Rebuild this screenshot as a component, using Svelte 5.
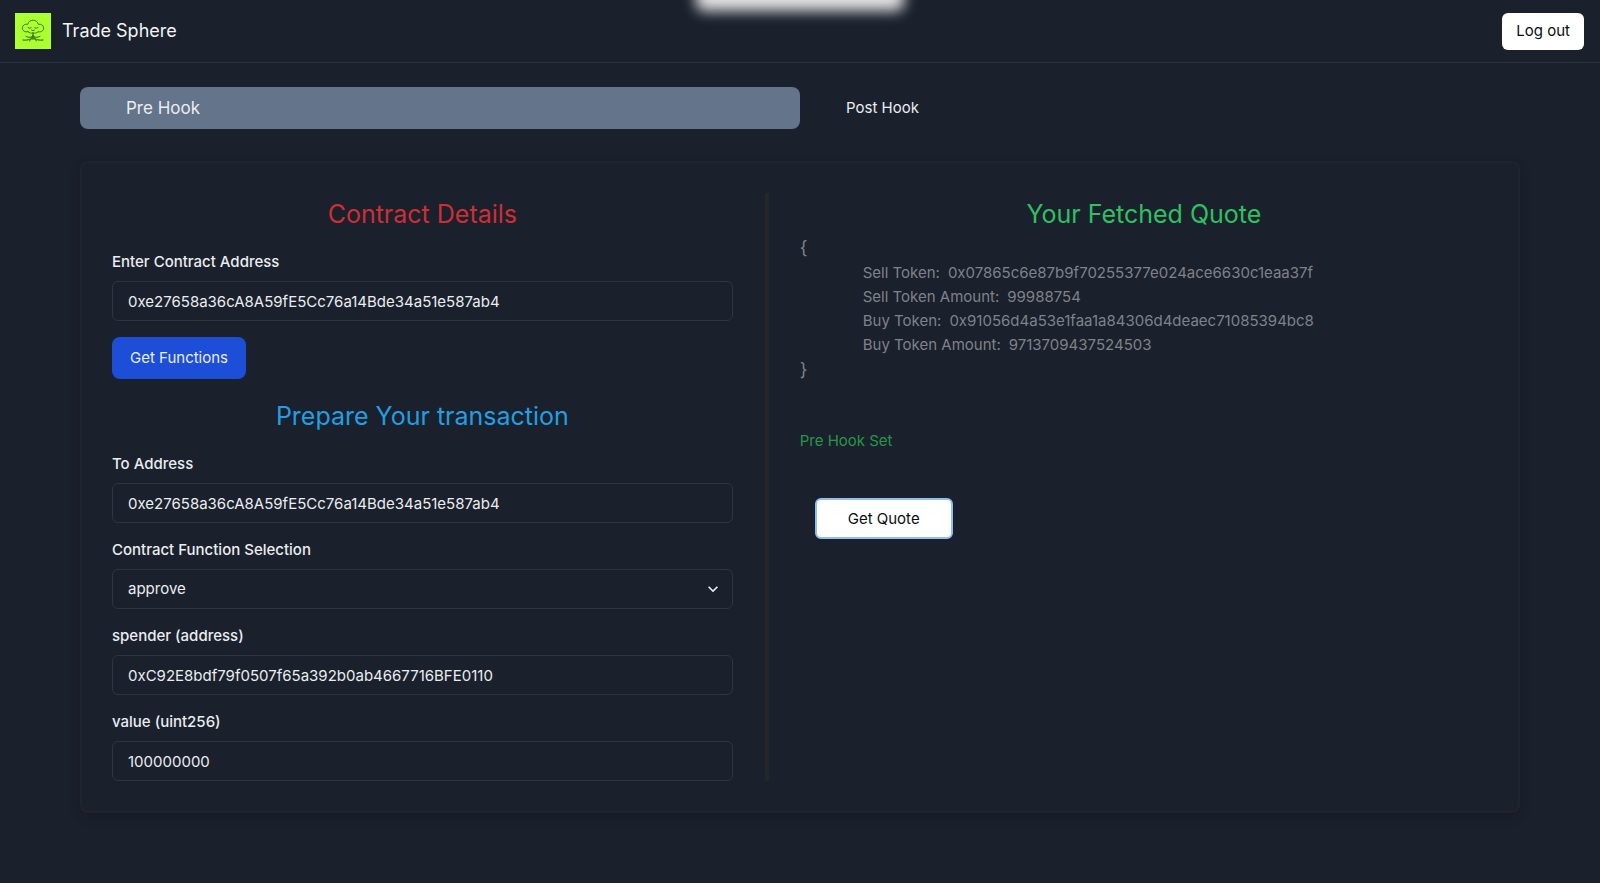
<script>
  let contractAddress = $state('0xe27658a36cA8A59fE5Cc76a14Bde34a51e587ab4');
  let toAddress = $state('0xe27658a36cA8A59fE5Cc76a14Bde34a51e587ab4');
  let selected = $state('approve');
  let spender = $state('0xC92E8bdf79f0507f65a392b0ab4667716BFE0110');
  let amount = $state('100000000');
  let tab = $state('pre');

  const quote = [
    ['Sell Token', '0x07865c6e87b9f70255377e024ace6630c1eaa37f'],
    ['Sell Token Amount', '99988754'],
    ['Buy Token', '0x91056d4a53e1faa1a84306d4deaec71085394bc8'],
    ['Buy Token Amount', '9713709437524503'],
  ];
</script>

<div class="page">
  <div class="glow" aria-hidden="true"></div>

  <header>
    <a class="brand" href="#home">
      <svg class="logo" viewBox="0 0 36 36" aria-hidden="true">
        <rect width="36" height="36" fill="#adff2f" />
        <g fill="none" stroke="#3b7d1e" stroke-linecap="round" stroke-linejoin="round">
          <path d="M13 18.700c-3.200.8-5.800-1-5.600-3.900.2-2.700 2.800-4.200 5.300-3.400.6-2.600 2.700-4.200 5.300-4.200s4.700 1.600 5.300 4.200c2.500-.8 5.100.7 5.300 3.400.2 2.900-2.400 4.700-5.600 3.900-1.400 1.400-3.200 1.700-5 1.200-1.800.5-3.600.2-5-1.200z" />
          <path d="M13 14.600q1.600 1.400 3.200.3M19.800 14.900q1.600 1.100 3.200-.3M16.500 17.200q1.500.9 3 0" />
          <path stroke="#1f5c20" d="M18 20v6.500M18 22.500c-2 2.500-4.500 2.200-7 .8M18 22.500c2 2.500 4.500 2.200 7 .8M17.500 24c-2 3-6 3.500-9.500 3M18.500 24c2 3 6 3.500 9.500 3M17.500 25l-3 2.800M18.500 25l3 2.800" />
        </g>
      </svg>
      <span>Trade Sphere</span>
    </a>
    <button class="light logout" type="button">Log out</button>
  </header>

  <main>
    <div class="tabs" role="tablist">
      <button type="button" role="tab" aria-selected={tab === 'pre'} class:active={tab === 'pre'} onclick={() => (tab = 'pre')}>Pre Hook</button>
      <button type="button" role="tab" aria-selected={tab === 'post'} class:active={tab === 'post'} onclick={() => (tab = 'post')}>Post Hook</button>
    </div>

    <div class="card">
      <form class="left" onsubmit={(e) => e.preventDefault()}>
        <h2 class="red">Contract Details</h2>
        <div class="field">
          <label for="contract">Enter Contract Address</label>
          <input id="contract" type="text" bind:value={contractAddress} />
        </div>
        <button class="primary" type="button">Get Functions</button>

        <h2 class="blue">Prepare Your transaction</h2>
        <div class="field">
          <label for="to">To Address</label>
          <input id="to" type="text" bind:value={toAddress} />
        </div>
        <div class="field">
          <label for="fn">Contract Function Selection</label>
          <div class="select">
            <select id="fn" bind:value={selected}>
              <option>approve</option>
            </select>
            <svg viewBox="0 0 24 24" aria-hidden="true">
              <path fill="currentColor" d="M16.590 8.590L12 13.170 7.410 8.590 6 10l6 6 6-6z" />
            </svg>
          </div>
        </div>
        <div class="field">
          <label for="spender">spender (address)</label>
          <input id="spender" type="text" bind:value={spender} />
        </div>
        <div class="field">
          <label for="value">value (uint256)</label>
          <input id="value" type="text" bind:value={amount} />
        </div>
      </form>

      <section class="right">
        <h2 class="green">Your Fetched Quote</h2>
        <div class="quote">
          <div class="brace">{'{'}</div>
          <dl>
            {#each quote as [name, value]}
              <div><dt>{name}:</dt><dd>{value}</dd></div>
            {/each}
          </dl>
          <div class="brace">{'}'}</div>
        </div>
        <p class="status">Pre Hook Set</p>
        <button class="light get-quote" type="button">Get Quote</button>
      </section>
    </div>
  </main>
</div>

<style>
  :global(body) {
    margin: 0;
    background: #1a202c;
  }
  .page,
  .page * {
    box-sizing: border-box;
  }
  .page {
    position: relative;
    min-height: 100vh;
    overflow: hidden;
    background: #1a202c;
    color: #ebedf0;
    font: 400 15px/24px Inter, "Liberation Sans", sans-serif;
  }
  button,
  input,
  select {
    font: inherit;
    color: inherit;
    margin: 0;
  }
  button {
    border: 0;
    cursor: pointer;
  }
  .glow {
    position: absolute;
    top: -40px;
    left: calc(50% - 104px);
    width: 208px;
    height: 51px;
    border-radius: 8px;
    background: #e2e2e4;
    filter: blur(7px);
  }
  header {
    display: flex;
    align-items: center;
    justify-content: space-between;
    height: 63px;
    padding: 0 16px 0 15px;
    border-bottom: 1px solid #2c313d;
  }
  .brand {
    display: flex;
    align-items: center;
    gap: 11px;
    color: #f3f4f6;
    font-size: 18px;
    text-decoration: none;
  }
  .logo {
    width: 36px;
    height: 36px;
  }
  .light {
    background: #fff;
    color: #0b0c10;
    border-radius: 6px;
  }
  .logout {
    height: 37px;
    padding: 0 14px;
  }
  main {
    padding: 24px 80px 64px;
  }
  .tabs {
    display: grid;
    grid-template-columns: 1fr 1fr;
    margin-bottom: 32px;
  }
  .tabs button {
    height: 42px;
    padding: 0 46px;
    border-radius: 8px;
    background: transparent;
    text-align: left;
  }
  .tabs .active {
    background: #64748b;
    font-size: 17px;
  }
  .card {
    display: grid;
    grid-template-columns: 21fr 23fr;
    padding: 30px;
    border: 2px solid #21242a;
    border-radius: 8px;
    box-shadow: 0 4px 8px #191b26;
  }
  .left {
    padding-right: 32px;
    border-right: 4px solid #25262a;
  }
  .right {
    padding-left: 31px;
  }
  h2 {
    margin: 0;
    font-size: 25px;
    font-weight: 400;
    line-height: 42px;
    text-align: center;
  }
  .red {
    color: #cc2f35;
  }
  .blue {
    color: #219fe0;
  }
  .green {
    color: #2fc160;
  }
  .field {
    display: grid;
    gap: 7px;
    margin-top: 15px;
  }
  label {
    font-weight: 500;
  }
  input,
  select {
    width: 100%;
    height: 40px;
    padding: 0 15px;
    border: 1px solid #2e3440;
    border-radius: 6px;
    background: transparent;
    appearance: none;
  }
  .select {
    display: grid;
    align-items: center;
  }
  .select > * {
    grid-area: 1 / 1;
  }
  .select svg {
    width: 20px;
    height: 20px;
    margin-right: 10px;
    justify-self: end;
    pointer-events: none;
  }
  .primary {
    display: block;
    height: 42px;
    margin: 16px 0;
    padding: 0 18px;
    border-radius: 8px;
    background: #1d4ed8;
  }
  .quote {
    color: #808289;
  }
  .brace {
    height: 26px;
    font-size: 18px;
    line-height: 26px;
  }
  dl {
    margin: 0;
    padding-left: 63px;
  }
  dl div {
    display: flex;
    gap: 8px;
  }
  dd {
    margin: 0;
  }
  .status {
    margin: 46px 0 45px;
    color: #269749;
  }
  .get-quote {
    height: 41px;
    margin-left: 15px;
    padding: 0 31px;
    border: 2px solid #8fbff0;
  }
</style>
